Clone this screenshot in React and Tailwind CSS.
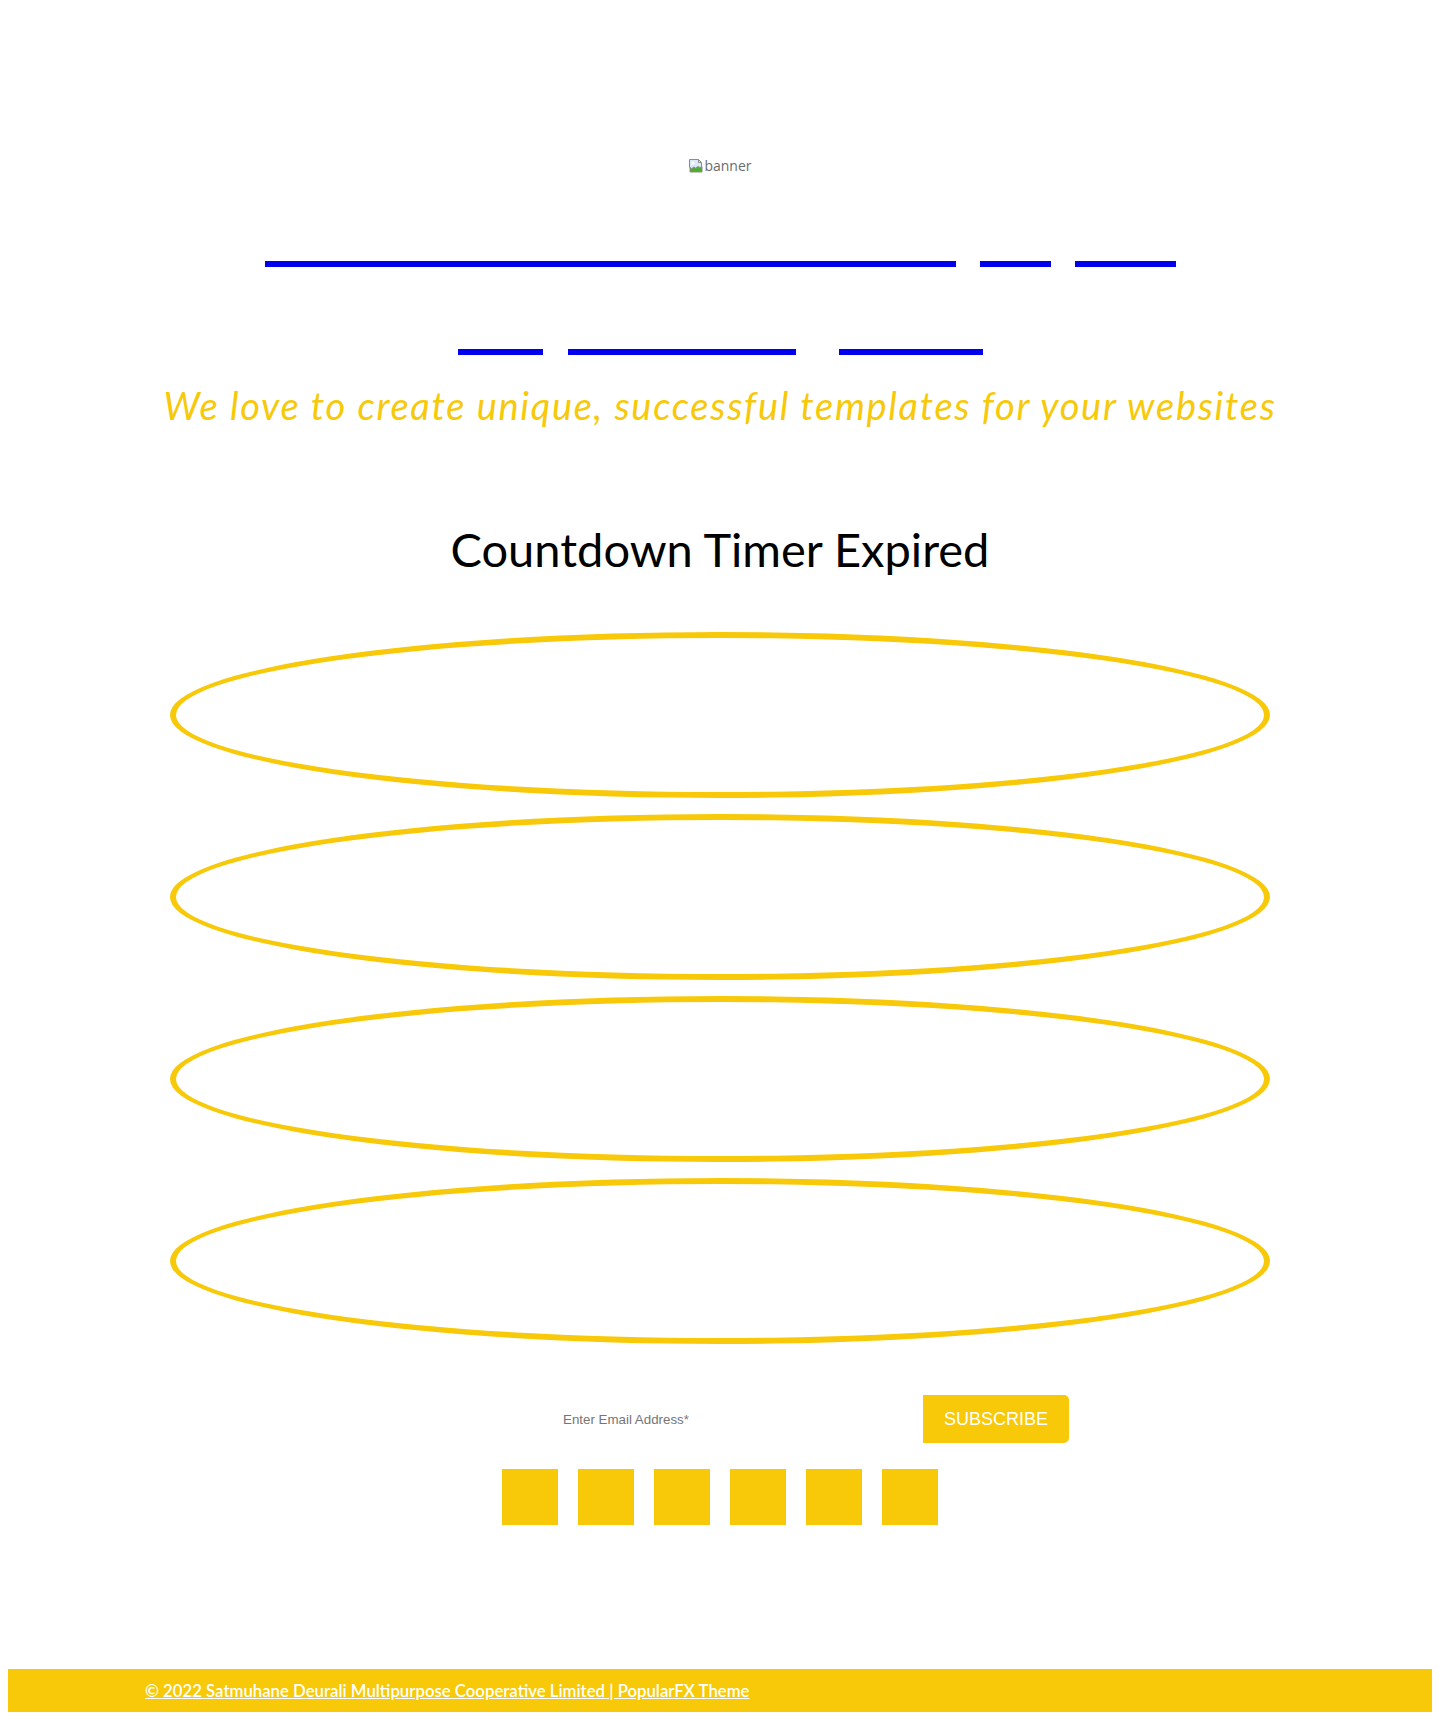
import React from "react"

const yellow = "bg-[#f7c908]"

function BrokenImage() {
  return (
    <svg width="16" height="16" viewBox="0 0 16 16" className="shrink-0">
      <path d="M1.5 1.5h9l3 3v4l-2 1.5-2-1.5-2 2-2-1.5-2 2-2-1.5z" fill="#dbe9f7" stroke="#8c8c8c" />
      <path d="M10.5 1.5v3h3" fill="none" stroke="#8c8c8c" />
      <circle cx="5" cy="5" r="1.6" fill="#ffffff" />
      <path d="M2 9.5l2 1.5 2-2 2 1.5 2-2 2 1.5 2-1.5v5.5h-12z" fill="#4caf2a" stroke="#8c8c8c" />
    </svg>
  )
}

function Bar({ w, className = "" }) {
  return <span className={`block h-[6px] bg-[#0000ee] ${w} ${className}`} />
}

export default function App() {
  return (
    <div className="min-h-[1720px] bg-white p-2 flex flex-col font-['Lato',sans-serif]">
      {/* banner */}
      <div className="mt-[150px] flex justify-center items-center h-4">
        <BrokenImage />
        <span className="text-[14px] leading-4 text-[#6b6b6b] font-['Open_Sans',sans-serif]">banner</span>
      </div>

      {/* menu links */}
      <nav className="mt-[87px] flex justify-center gap-[24px]">
        <Bar w="w-[691px]" />
        <Bar w="w-[71px]" />
        <Bar w="w-[101px]" />
      </nav>
      <nav className="mt-[82px] flex justify-center">
        <Bar w="w-[85px]" />
        <Bar w="w-[228px]" className="ml-[25px]" />
        <Bar w="w-[144px]" className="ml-[43px]" />
      </nav>

      <p className="mt-[27px] h-[46px] leading-[46px] text-center italic text-[38px] tracking-[1.7px] text-[#f7c908]">
        We love to create unique, successful templates for your websites
      </p>

      <h1 className="mt-[92px] h-[58px] leading-[58px] text-center text-[47px] text-black">
        Countdown Timer Expired
      </h1>

      <div className="mt-[54px] flex flex-col items-center gap-4">
        {[0, 1, 2, 3].map((i) => (
          <div key={i} className="w-[1100px] h-[166px] rounded-[50%] border-[6px] border-[#f7c908]" />
        ))}
      </div>

      <form className="mt-[51px] flex pl-[540px] font-['Liberation_Sans',Arial,sans-serif]" onSubmit={(e) => e.preventDefault()}>
        <input
          type="email"
          placeholder="Enter Email Address*"
          className="w-[375px] h-12 px-[15px] text-[13.33px] text-[#333] placeholder:text-[#757575] outline-none bg-white"
        />
        <button type="submit" className={`w-[146px] h-12 ${yellow} text-white text-[18px] rounded-r-[5px]`}>
          SUBSCRIBE
        </button>
      </form>

      <div className="mt-[26px] flex justify-center gap-5">
        {[0, 1, 2, 3, 4, 5].map((i) => (
          <a key={i} href="#" className={`block w-14 h-14 ${yellow}`} />
        ))}
      </div>

      <footer className={`mt-auto h-[43px] ${yellow} flex items-center pl-[137px]`}>
        <a href="#" className="text-white font-semibold text-[16.75px] underline">
          © 2022 Satmuhane Deurali Multipurpose Cooperative Limited | PopularFX Theme
        </a>
      </footer>
    </div>
  )
}
